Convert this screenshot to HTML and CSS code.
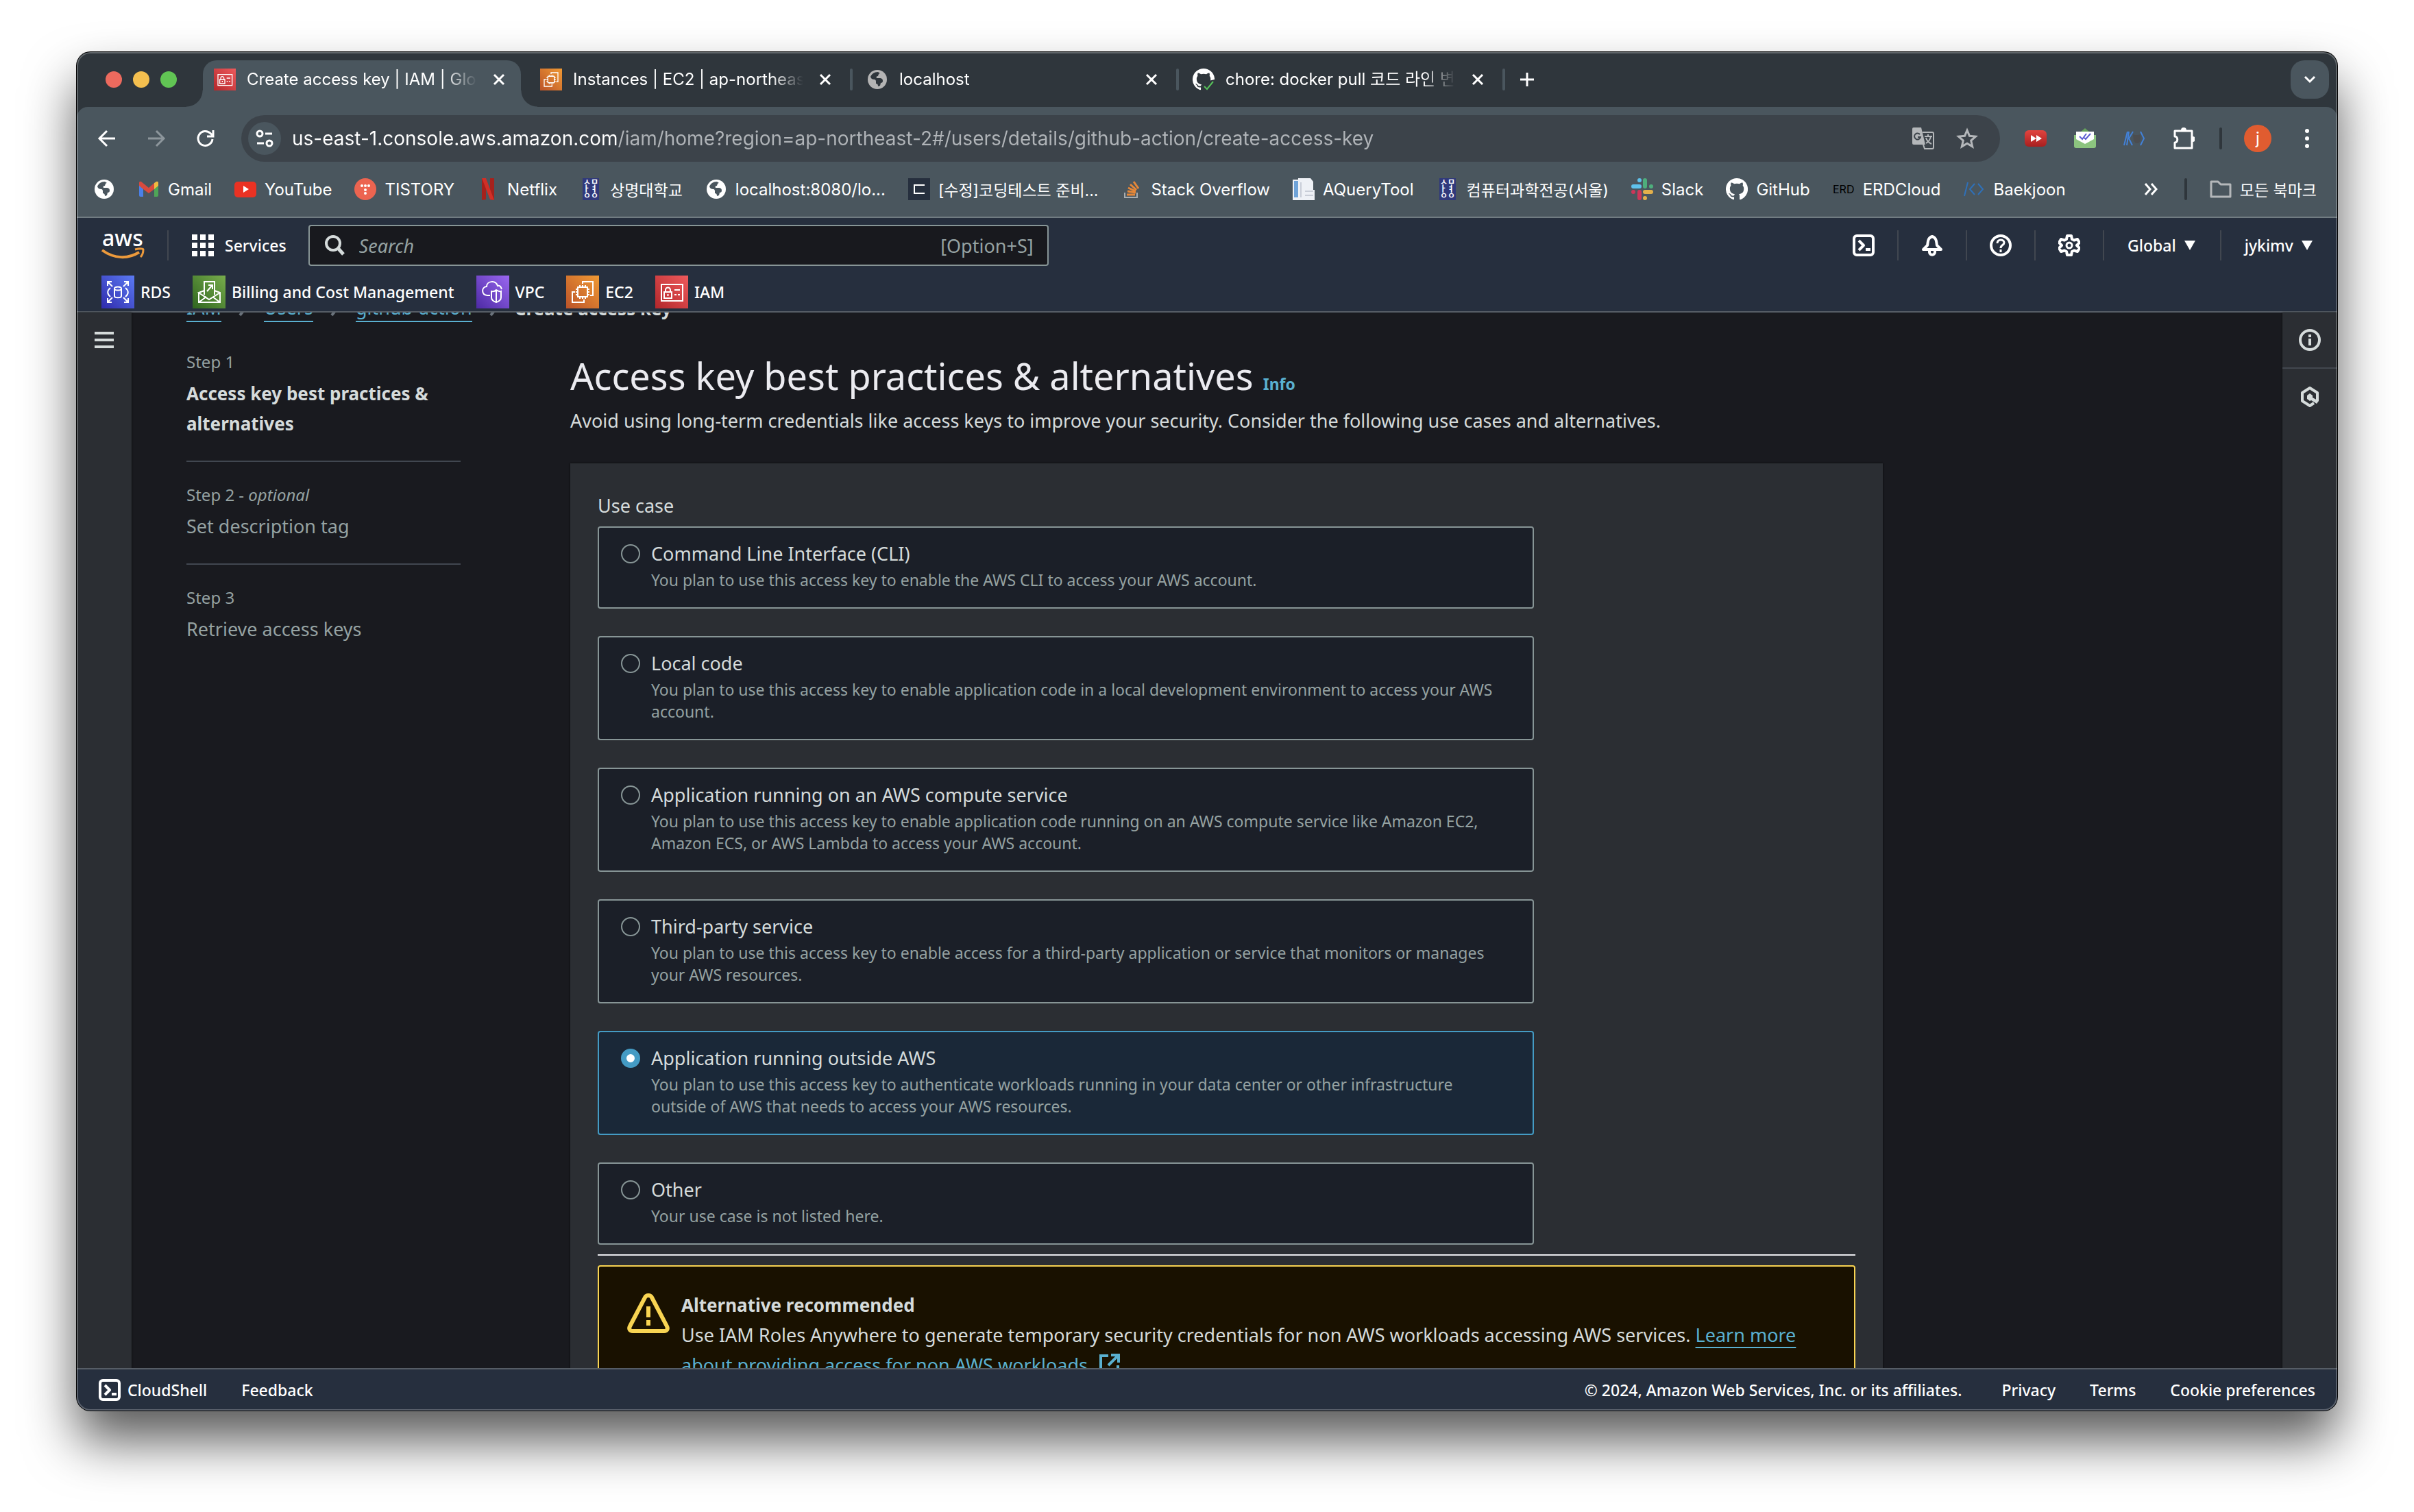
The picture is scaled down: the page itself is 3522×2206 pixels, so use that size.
FILE: index.html
```html
<!DOCTYPE html>
<html lang="en">
<head>
  <meta charset="UTF-8" />
  <meta name="viewport" content="width=device-width, initial-scale=1" />
  <title>Create access key | IAM | Global</title>
  <link rel="stylesheet" href="styles.css">
</head>
<body>
  <!-- shared icons -->
  <svg class="sprite" aria-hidden="true">
    <defs>
      <linearGradient id="g-red" x1="0" y1="1" x2="1" y2="0"><stop offset="0" stop-color="#b3272b" /><stop offset="1" stop-color="#ee5a5c" /></linearGradient>
      <linearGradient id="g-orange" x1="0" y1="1" x2="1" y2="0"><stop offset="0" stop-color="#bb5329" /><stop offset="1" stop-color="#f09a34" /></linearGradient>
      <linearGradient id="g-blue" x1="0" y1="1" x2="1" y2="0"><stop offset="0" stop-color="#2f2bac" /><stop offset="1" stop-color="#5b7af3" /></linearGradient>
      <linearGradient id="g-green" x1="0" y1="1" x2="1" y2="0"><stop offset="0" stop-color="#2f651f" /><stop offset="1" stop-color="#78ad4c" /></linearGradient>
      <linearGradient id="g-purple" x1="0" y1="1" x2="1" y2="0"><stop offset="0" stop-color="#4d2aa4" /><stop offset="1" stop-color="#9a67f0" /></linearGradient>
      <linearGradient id="g-play" x1="0" y1="0" x2="0" y2="1"><stop offset="0" stop-color="#e2443f" /><stop offset="1" stop-color="#a81f1f" /></linearGradient>
    </defs>
    <symbol id="i-iam" viewBox="0 0 48 48">
      <path fill="url(#g-red)" d="M0 0h48v48H0z" />
      <g fill="none" stroke="#fff" stroke-width="2"><path d="M9 13h31v24H9zM13 24h11v9H13zM15 24v-3a3.500 3.500 0 0 1 7 0v3M18.500 27v3M28 21h8M28 28h3M33 28h3" /></g>
    </symbol>
    <symbol id="i-ec2" viewBox="0 0 48 48">
      <path fill="url(#g-orange)" d="M0 0h48v48H0z" />
      <g fill="none" stroke="#fff" stroke-width="2"><path d="M17 17h14v14H17zM20 17v-3M24 17v-3M28 17v-3M20 34v-3M24 34v-3M28 34v-3M17 20h-3M17 24h-3M17 28h-3M34 20h-3M34 24h-3M34 28h-3M24 12V9h15v20h-4M13 24H9v15h17v-4" /></g>
    </symbol>
    <symbol id="i-globe" viewBox="0 0 32 32">
      <circle cx="16" cy="16" r="14" fill="currentColor" />
      <path fill="var(--hole)" d="M17 5c-6 0-9 3-11 7 1 3 3 4 6 4 1 0 2 1 2 3v3c2 0 3 1 3 4l3-1 1-4c2 0 3-1 3-3 0-3-2-4-4-4h-5c-1-2 0-3 2-3 1-3 1-4 3-4z" />
    </symbol>
    <symbol id="i-close" viewBox="0 0 24 24"><path d="M5 5l14 14M19 5L5 19" stroke="currentColor" stroke-width="3" /></symbol>
    <symbol id="i-github" viewBox="0 0 16 16"><path fill="currentColor" d="M8 0a8 8 0 0 0-2.530 15.590c.4.070.55-.17.55-.38v-1.490c-2.010.37-2.530-.49-2.690-.94-.09-.23-.48-.94-.82-1.130-.28-.15-.68-.52-.01-.53.63-.01 1.080.58 1.230.82.72 1.210 1.870.87 2.330.66.07-.52.28-.87.510-1.070-1.780-.2-3.640-.89-3.640-3.950 0-.87.310-1.590.82-2.150-.08-.2-.36-1.020.08-2.120 0 0 .67-.21 2.200.82a7.600 7.600 0 0 1 4 0c1.530-1.040 2.200-.82 2.200-.82.44 1.100.16 1.920.08 2.120.510.56.82 1.270.82 2.150 0 3.070-1.870 3.750-3.650 3.950.29.25.54.73.54 1.480v2.200c0 .21.15.46.55.38A8 8 0 0 0 8 0z" /></symbol>
    <symbol id="i-shell" viewBox="0 0 32 32"><g fill="none" stroke="currentColor" stroke-width="4" stroke-linejoin="round"><rect x="2" y="2" width="28" height="28" rx="4" /><path d="M9 9l7 7-7 7M19 22h7" /></g></symbol>
    <symbol id="i-chevron" viewBox="0 0 24 24"><path d="M8 2l8 10-8 10" fill="none" stroke="currentColor" stroke-width="4" /></symbol>
  </svg>

  <div class="window">
    <div class="tab-strip">
      <div class="lights">
        <span class="light light-red"></span>
        <span class="light light-yellow"></span>
        <span class="light light-green"></span>
      </div>
      <div class="tabs">
        <div class="tab active">
          <svg class="icon"><use href="#i-iam" /></svg>
          <span class="tab-title">Create access key | IAM | Global</span>
          <button class="tab-close" aria-label="Close"><svg><use href="#i-close" /></svg></button>
        </div>
        <div class="tab">
          <svg class="icon"><use href="#i-ec2" /></svg>
          <span class="tab-title">Instances | EC2 | ap-northeast-2</span>
          <button class="tab-close" aria-label="Close"><svg><use href="#i-close" /></svg></button>
        </div>
        <div class="tab">
          <svg class="icon globe-dim"><use href="#i-globe" /></svg>
          <span class="tab-title">localhost</span>
          <button class="tab-close" aria-label="Close"><svg><use href="#i-close" /></svg></button>
        </div>
        <div class="tab">
          <svg class="icon" viewBox="0 0 32 32"><use href="#i-github" width="32" height="32" /><path d="M15 20l17-4v16H15z" fill="#2f363c" /><path d="M17 26l4 4 9-11" fill="none" stroke="#57c25a" stroke-width="2" /></svg>
          <span class="tab-title">chore: docker pull 코드 라인 변경</span>
          <button class="tab-close" aria-label="Close"><svg><use href="#i-close" /></svg></button>
        </div>
      </div>
      <button class="new-tab" aria-label="New tab"><svg viewBox="0 0 24 24"><path d="M12 2v20M2 12h20" stroke="currentColor" stroke-width="3" /></svg></button>
      <button class="tab-search" aria-label="Search tabs"><svg viewBox="0 0 24 24"><path d="M5 8l7 7 7-7" fill="none" stroke="currentColor" stroke-width="3" /></svg></button>
    </div>

    <div class="toolbar">
      <div class="nav-row">
        <button class="tool" aria-label="Back"><svg class="icon" viewBox="0 0 32 32"><path d="M28 16H6M16 5L5 16l11 11" fill="none" stroke="currentColor" stroke-width="3" /></svg></button>
        <button class="tool tool-off" aria-label="Forward"><svg class="icon" viewBox="0 0 32 32"><path d="M4 16h22M16 5l11 11-11 11" fill="none" stroke="currentColor" stroke-width="3" /></svg></button>
        <button class="tool" aria-label="Reload"><svg class="icon" viewBox="0 0 32 32"><path d="M26 17a10.500 10.500 0 1 1-3-8.500l3 3M27 4v9h-9" fill="none" stroke="currentColor" stroke-width="3" /></svg></button>
        <div class="omnibox">
          <button class="site-info" aria-label="Site information"><svg class="icon" viewBox="0 0 32 32"><g fill="none" stroke="currentColor" stroke-width="3"><circle cx="9" cy="9" r="4" /><path d="M17 9h10M5 23h10" /><circle cx="23" cy="23" r="4" /></g></svg></button>
          <input class="url" type="text" aria-label="Address" value="us-east-1.console.aws.amazon.com/iam/home?region=ap-northeast-2#/users/details/github-action/create-access-key">
          <button class="plain dim" aria-label="Translate"><svg class="icon" viewBox="0 0 32 32"><path fill="currentColor" d="M2 0h11l6 25H2a2 2 0 0 1-2-2V2a2 2 0 0 1 2-2z" /><path d="M15 7h14a2 2 0 0 1 2 2v20a2 2 0 0 1-2 2H18l-2-6M18 13h11M23 10v3M27 13c-1 6-4 8-7 10M20 15c1 4 4 7 8 9" fill="none" stroke="currentColor" stroke-width="2" /><path d="M11 10a4.500 4.500 0 1 0 1 4H8" fill="none" stroke="#3c434a" stroke-width="2" /></svg></button>
          <button class="plain dim" aria-label="Bookmark"><svg class="icon" viewBox="0 0 32 32"><path d="M16 4l3.500 8.300 9 .8-6.800 6 2 8.800L16 23.200l-7.700 4.700 2-8.800-6.800-6 9-.8z" fill="none" stroke="currentColor" stroke-width="3" /></svg></button>
        </div>
        <button class="tool" aria-label="Video speed"><svg class="icon" viewBox="0 0 32 32"><rect y="4" width="32" height="24" rx="6" fill="url(#g-play)" /><path fill="#fff" d="M9 11l8 5-8 5zM17 11l8 5-8 5z" /></svg></button>
        <button class="tool" aria-label="Mail tracker"><svg class="icon" viewBox="0 0 32 32"><path fill="#67a35c" d="M16 1L3 12h26z" /><path fill="#8cc47f" d="M0 11h32v16a3 3 0 0 1-3 3H3a3 3 0 0 1-3-3z" /><path fill="#fff" d="M3 6h26v11l-13 7-13-7z" /><path d="M8 13l4 4 6-8M15 15l2 2 7-8" fill="none" stroke="#5a5bd0" stroke-width="2" /></svg></button>
        <button class="tool" aria-label="Code extension"><svg class="icon" viewBox="0 0 32 32"><path d="M14 10l3 1h4l4-1v9l-3 4h-4l-3-4z" fill="#4b4d50" /><path d="M6 6L1 26M8 6L5 26M14 6L8 16l5 10M25 6l5 10-5 10" fill="none" stroke="#4281d8" stroke-width="2" /></svg></button>
        <button class="tool" aria-label="Extensions"><svg class="icon" viewBox="0 0 32 32"><path d="M3 5h25v25H3v-8c5 0 5-9 0-9z" fill="none" stroke="currentColor" stroke-width="3" stroke-linejoin="round" /><path fill="currentColor" d="M12 4a4 4 0 0 1 8 0zM29 13a4 4 0 0 1 0 8z" /></svg></button>
        <span class="tool-sep"></span>
        <button class="tool" aria-label="Profile"><span class="avatar">j</span></button>
        <button class="tool" aria-label="Menu"><svg class="icon" viewBox="0 0 32 32"><g fill="currentColor"><circle cx="16" cy="5" r="3" /><circle cx="16" cy="16" r="3" /><circle cx="16" cy="27" r="3" /></g></svg></button>
      </div>

      <div class="bookmarks">
        <a href="#" aria-label="Bookmark"><svg class="icon globe-light"><use href="#i-globe" /></svg></a>
        <a href="#"><svg class="icon" viewBox="0 0 32 32"><path fill="#4a80e8" d="M2 8l6 5v14H4a2 2 0 0 1-2-2z" /><path fill="#4fa557" d="M30 8l-6 5v14h4a2 2 0 0 0 2-2z" /><path fill="#f0bb40" d="M24 7l3-2a2 2 0 0 1 3 2v4l-6 5z" /><path fill="#d94a3e" d="M2 7a2 2 0 0 1 3-2l11 9 8-7v9l-8 6-8-6-6-5z" /></svg>Gmail</a>
        <a href="#"><svg class="icon" viewBox="0 0 32 32"><rect y="5" width="32" height="23" rx="5" fill="#ea3223" /><path fill="#fff" d="M13 11l8 5-8 5z" /></svg>YouTube</a>
        <a href="#"><svg class="icon" viewBox="0 0 32 32"><circle cx="16" cy="16" r="16" fill="#ec6450" /><g fill="#fff"><circle cx="11" cy="11" r="2" /><circle cx="16" cy="11" r="2" /><circle cx="21" cy="11" r="2" /><circle cx="16" cy="17" r="2" /><circle cx="16" cy="22" r="2" /></g></svg>TISTORY</a>
        <a href="#"><svg class="icon" viewBox="0 0 32 32"><path fill="#a5211c" d="M7 0h6v31l-6 1zM19 0h6v32l-6-1z" /><path fill="#d12f27" d="M7 0h6l12 32-6-1z" /></svg>Netflix</a>
        <a href="#" lang="ko"><svg class="icon smu" viewBox="0 0 32 32"><path fill="#30397c" d="M4 0h24v32H4z" /><text x="5 16" y="10">ㅅㅁ</text><text x="4 15" y="20">ㅏㅕ</text><text x="5 16" y="30">ㅇㅇ</text></svg>상명대학교</a>
        <a href="#"><svg class="icon globe-light"><use href="#i-globe" /></svg>localhost:8080/lo...</a>
        <a href="#" lang="ko"><svg class="icon" viewBox="0 0 32 32"><path fill="#262f3e" d="M0 0h32v32H0z" /><path d="M24 10H9v12h15" fill="none" stroke="#fff" stroke-width="2" /></svg>[수정]코딩테스트 준비...</a>
        <a href="#"><svg class="icon" viewBox="0 0 32 32"><path d="M6 21v7h18v-7" fill="none" stroke="#a9adb0" stroke-width="2" /><path d="M9 24h12M10 19l12 2M11 14l11 5M14 9l9 8M19 5l7 10" stroke="#e58738" stroke-width="3" /></svg>Stack Overflow</a>
        <a href="#"><svg class="icon" viewBox="0 0 32 32"><path fill="#eef1f6" d="M0 2h8V0h18l4 5v12h2v15H0z" /><path fill="#6fa3d8" d="M2 4h6v24H2z" /><path fill="#c9ced8" d="M11 6h2v22h-2zM18 18h12v2H18zM18 24h12v2H18z" /></svg>AQueryTool</a>
        <a href="#" lang="ko"><svg class="icon smu" viewBox="0 0 32 32"><path fill="#30397c" d="M4 0h24v32H4z" /><text x="5 16" y="10">ㅅㅁ</text><text x="4 15" y="20">ㅏㅕ</text><text x="5 16" y="30">ㅇㅇ</text></svg>컴퓨터과학전공(서울)</a>
        <a href="#"><svg class="icon" viewBox="0 0 32 32"><g stroke-width="6" stroke-linecap="round"><path d="M3 12h9M12 3v0" stroke="#5fc2ec" /><path d="M20 3v9M29 12v0" stroke="#4eae7c" /><path d="M20 20h9M20 29v0" stroke="#e3b04b" /><path d="M12 20v9M3 20v0" stroke="#cd3659" /></g></svg>Slack</a>
        <a href="#"><svg class="icon"><use href="#i-github" /></svg>GitHub</a>
        <a href="#"><svg class="icon erd" viewBox="0 0 32 32"><text x="0" y="22">ERD</text></svg>ERDCloud</a>
        <a href="#"><svg class="icon" viewBox="0 0 32 32"><path d="M7 6L2 26M17 8l-7 8 7 8M22 8l7 8-7 8" fill="none" stroke="#2f70b8" stroke-width="2" /></svg>Baekjoon</a>
        <button class="plain more" aria-label="More bookmarks"><svg class="icon" viewBox="0 0 32 32"><path d="M8 8l7 8-7 8M17 8l7 8-7 8" fill="none" stroke="currentColor" stroke-width="3" /></svg></button>
        <span class="tool-sep"></span>
        <a href="#" lang="ko"><svg class="icon dim" viewBox="0 0 32 32"><path d="M2 5h10l4 4h14v18H2z" fill="none" stroke="currentColor" stroke-width="3" stroke-linejoin="round" /></svg>모든 북마크</a>
      </div>
    </div>

    <header class="aws-header">
      <div class="header-row">
        <a href="#" class="logo" aria-label="AWS"><svg viewBox="0 0 62 42"><text x="1" y="22">aws</text><path d="M1 28c18 13 38 13 54 3" fill="none" stroke="#ec9a3c" stroke-width="4" /><path d="M49 27c9-2 12-1 12 0 0 4-1 8-4 11" fill="none" stroke="#ec9a3c" stroke-width="3" /></svg></a>
        <span class="divider"></span>
        <button class="header-btn services"><svg class="icon" viewBox="0 0 32 32"><g fill="currentColor"><path d="M0 0h8v8H0zM12 0h8v8h-8zM24 0h8v8h-8zM0 12h8v8H0zM12 12h8v8h-8zM24 12h8v8h-8zM0 24h8v8H0zM12 24h8v8h-8zM24 24h8v8h-8z" /></g></svg>Services</button>
        <div class="search">
          <svg class="icon" viewBox="0 0 32 32"><circle cx="14" cy="13" r="10" fill="none" stroke="currentColor" stroke-width="4" /><path d="M21 20l8 9" stroke="currentColor" stroke-width="5" /></svg>
          <input type="search" placeholder="Search" aria-label="Search">
          <span class="shortcut">[Option+S]</span>
        </div>
        <div class="header-tools">
          <button class="header-btn icon-btn" aria-label="CloudShell"><svg class="icon"><use href="#i-shell" /></svg></button>
          <button class="header-btn icon-btn" aria-label="Notifications"><svg class="icon" viewBox="0 0 32 32"><path d="M16 3c-7 2-6 9-7 13l-6 6h26l-6-6c-1-4 0-11-7-13zM12 23v3c0 5 8 5 8 0v-3" fill="none" stroke="currentColor" stroke-width="4" stroke-linejoin="round" /></svg></button>
          <button class="header-btn icon-btn" aria-label="Help"><svg class="icon" viewBox="0 0 32 32"><circle cx="16" cy="16" r="14" fill="none" stroke="currentColor" stroke-width="4" /><path d="M11 13c0-7 10-6 10-1 0 4-5 3-5 8M16 22v4" fill="none" stroke="currentColor" stroke-width="3" /></svg></button>
          <button class="header-btn icon-btn" aria-label="Settings"><svg class="icon" viewBox="0 0 32 32"><path d="M13 2h6l1 5 3 1.500 5-1.500 3 5-4 4 4 4-3 5-5-1.500-3 1.500-1 5h-6l-1-5-3-1.500L4 25l-3-5 4-4-4-4 3-5 5 1.500L12 7z" fill="none" stroke="currentColor" stroke-width="4" stroke-linejoin="round" /><circle cx="16" cy="16" r="4" fill="none" stroke="currentColor" stroke-width="3" /></svg></button>
          <button class="header-btn menu-btn">Global<svg class="caret" viewBox="0 0 16 14"><path d="M0 0h16L8 14z" fill="currentColor" /></svg></button>
          <button class="header-btn menu-btn">jykimv<svg class="caret" viewBox="0 0 16 14"><path d="M0 0h16L8 14z" fill="currentColor" /></svg></button>
        </div>
      </div>
      <nav class="favorites">
        <a href="#"><svg viewBox="0 0 48 48"><path fill="url(#g-blue)" d="M0 0h48v48H0z" /><g fill="none" stroke="#fff" stroke-width="2"><path d="M9 15V9h6M9 9l7 7M39 15V9h-6M39 9l-7 7M9 33v6h6M9 39l7-7M39 33v6h-6M39 39l-7-7M13 18c-5 4-5 9 0 13M35 18c5 4 5 9 0 13" /><ellipse cx="24" cy="19" rx="5" ry="2.500" /><path d="M19 19v11c0 3 10 3 10 0V19" /></g></svg>RDS</a>
        <a href="#"><svg viewBox="0 0 48 48"><path fill="url(#g-green)" d="M0 0h48v48H0z" /><g fill="none" stroke="#fff" stroke-width="2"><path d="M17 28V9h15v19M9 25v14h31V25l-8-3M17 22l-8 3 15 10 16-10M9 39l11-8M40 39l-11-8M21 23l7-8M23 14h6v6" /></g></svg>Billing and Cost Management</a>
        <a href="#"><svg viewBox="0 0 48 48"><path fill="url(#g-purple)" d="M0 0h48v48H0z" /><g fill="none" stroke="#fff" stroke-width="2"><path d="M20 29h-4c-9-1-9-12-1-13 0-8 13-10 16-1 4-1 5 2 6 5M29 21c4 3 7 2 7 2v9c0 4-4 6-7 7-3-1-7-3-7-7v-9s4 1 7-2zM29 22v16" /></g></svg>VPC</a>
        <a href="#"><svg><use href="#i-ec2" /></svg>EC2</a>
        <a href="#"><svg><use href="#i-iam" /></svg>IAM</a>
      </nav>
    </header>

    <div class="body">
      <aside class="rail">
        <button class="plain hamburger" aria-label="Open navigation"><svg viewBox="0 0 28 24"><path d="M0 2h28M0 12h28M0 22h28" stroke="currentColor" stroke-width="4" /></svg></button>
      </aside>

      <div class="content">
        <nav class="breadcrumb">
          <a href="#">IAM</a>
          <svg><use href="#i-chevron" /></svg>
          <a href="#">Users</a>
          <svg><use href="#i-chevron" /></svg>
          <a href="#">github-action</a>
          <svg><use href="#i-chevron" /></svg>
          <b>Create access key</b>
        </nav>
        <div class="wizard">
          <ol class="steps">
            <li class="current"><small>Step 1</small><b>Access key best practices &amp; alternatives</b></li>
            <li><small>Step 2 - <i>optional</i></small><span>Set description tag</span></li>
            <li><small>Step 3</small><span>Retrieve access keys</span></li>
          </ol>

          <main>
            <h1>Access key best practices &amp; alternatives <a href="#" class="info">Info</a></h1>
            <p class="lead">Avoid using long-term credentials like access keys to improve your security. Consider the following use cases and alternatives.</p>

            <section class="panel">
              <fieldset class="use-cases">
                <legend>Use case</legend>
                <label class="card">
                  <input type="radio" name="usecase">
                  <span class="card-title">Command Line Interface (CLI)</span>
                  <span class="card-text">You plan to use this access key to enable the AWS CLI to access your AWS account.</span>
                </label>
                <label class="card">
                  <input type="radio" name="usecase">
                  <span class="card-title">Local code</span>
                  <span class="card-text">You plan to use this access key to enable application code in a local development environment to access your AWS account.</span>
                </label>
                <label class="card">
                  <input type="radio" name="usecase">
                  <span class="card-title">Application running on an AWS compute service</span>
                  <span class="card-text">You plan to use this access key to enable application code running on an AWS compute service like Amazon EC2, Amazon ECS, or AWS Lambda to access your AWS account.</span>
                </label>
                <label class="card">
                  <input type="radio" name="usecase">
                  <span class="card-title">Third-party service</span>
                  <span class="card-text">You plan to use this access key to enable access for a third-party application or service that monitors or manages your AWS resources.</span>
                </label>
                <label class="card">
                  <input type="radio" name="usecase" checked>
                  <span class="card-title">Application running outside AWS</span>
                  <span class="card-text">You plan to use this access key to authenticate workloads running in your data center or other infrastructure outside of AWS that needs to access your AWS resources.</span>
                </label>
                <label class="card">
                  <input type="radio" name="usecase">
                  <span class="card-title">Other</span>
                  <span class="card-text">Your use case is not listed here.</span>
                </label>
              </fieldset>
              <hr>
              <div class="alert">
                <svg viewBox="0 0 64 60"><path d="M32 4c-3 0-4 1-5 3L5 49c-2 4 0 7 4 7h46c4 0 6-3 4-7L37 7c-1-2-2-3-5-3z" fill="none" stroke="currentColor" stroke-width="6" stroke-linejoin="round" /><path d="M32 20v16M32 40v8" stroke="currentColor" stroke-width="6" /></svg>
                <div>
                  <b>Alternative recommended</b>
                  <p>Use IAM Roles Anywhere to generate temporary security credentials for non AWS workloads accessing AWS services. <a href="#">Learn more about providing access for non AWS workloads.</a> <svg class="external" viewBox="0 0 32 32"><path d="M14 4H3v25h25V18M18 3h11v11M28 4L14 18" fill="none" stroke="currentColor" stroke-width="4" /></svg></p>
                </div>
              </div>
            </section>
          </main>
        </div>
      </div>

      <aside class="rail rail-right">
        <button class="plain" aria-label="Info"><svg class="icon" viewBox="0 0 32 32"><circle cx="16" cy="16" r="14" fill="none" stroke="currentColor" stroke-width="4" /><path d="M16 14v10M16 8v4" stroke="currentColor" stroke-width="4" /></svg></button>
        <button class="plain" aria-label="Amazon Q"><svg class="icon" viewBox="0 0 32 32"><path d="M27 22V10L16 3 5 10v12l11 7 6-4" fill="none" stroke="currentColor" stroke-width="4" stroke-linejoin="round" /><path d="M16 11l4 3v3l9 5-3 4-8-5-2 1-4-3v-5z" fill="currentColor" /></svg></button>
      </aside>
    </div>

    <footer class="aws-footer">
      <button class="plain"><svg class="icon"><use href="#i-shell" /></svg>CloudShell</button>
      <a href="#">Feedback</a>
      <span class="copyright">© 2024, Amazon Web Services, Inc. or its affiliates.</span>
      <a href="#">Privacy</a>
      <a href="#">Terms</a>
      <a href="#">Cookie preferences</a>
    </footer>
  </div>
</body>
</html>
```

FILE: styles.css
```css
:root {
  --chrome: #4a565e;
  --strip: #2f363c;
  --navy: #262f3e;
  --page: #191a1f;
  --panel: #2b2e33;
  --text: #d5dbdb;
  --muted: #95a2a2;
  --line: #879596;
  --link: #5ab0d0;
  --ui: Inter, "Noto Sans CJK KR", sans-serif;
  --ember: "Noto Sans", "Open Sans", "Noto Sans CJK KR", sans-serif;
}

* {
  box-sizing: border-box;
}

body {
  margin: 0;
  height: 100vh;
  padding: 76px 112px 148px;
  background: #fff;
  font-family: var(--ember);
  display: flex;
}

button {
  font: inherit;
  color: inherit;
  background: none;
  border: none;
  padding: 0;
  cursor: pointer;
}

a {
  color: inherit;
  text-decoration: none;
}

svg {
  display: block;
  flex: none;
}

.sprite {
  position: absolute;
  width: 0;
  height: 0;
}

.icon {
  width: 32px;
  height: 32px;
}

.plain {
  display: flex;
  align-items: center;
}

.dim {
  color: #b4b7ba;
}

.globe-light {
  color: #fff;
  --hole: var(--chrome);
}

.globe-dim {
  color: #b4b4b4;
  --hole: var(--strip);
}

.smu text {
  fill: #fff;
  font-size: 12px;
  font-weight: 700;
}

.erd text {
  font-size: 16px;
}

/* window */
.window {
  position: relative;
  flex: 1;
  min-width: 0;
  display: flex;
  flex-direction: column;
  overflow: hidden;
  background: var(--strip);
  border-radius: 20px;
  box-shadow: 0 0 0 1px #000, 0 44px 76px rgba(0, 0, 0, 0.65);
}

.window::after {
  content: "";
  position: absolute;
  inset: 0;
  border: 2px solid rgba(255, 255, 255, 0.24);
  border-radius: 20px;
  pointer-events: none;
}

/* tabs */
.tab-strip {
  display: flex;
  height: 80px;
  padding: 12px 12px 0 42px;
  font-family: var(--ui);
  font-size: 24px;
  color: #fff;
}

.lights {
  display: flex;
  align-items: center;
  gap: 16px;
  height: 56px;
  margin-right: 38px;
}

.light {
  width: 24px;
  height: 24px;
  border-radius: 50%;
}

.light-red { background: #ec6a5e; }
.light-yellow { background: #f4bf4f; }
.light-green { background: #61c554; }

.tabs {
  display: flex;
  gap: 12px;
}

.tab {
  position: relative;
  display: flex;
  align-items: center;
  gap: 16px;
  width: 464px;
  height: 68px;
  padding: 0 20px 12px 16px;
}

.tab-title {
  flex: 1;
  margin-right: 4px;
  overflow: hidden;
  line-height: 32px;
  white-space: nowrap;
  mask-image: linear-gradient(to left, transparent, #000 48px);
}

.tab-close svg,
.new-tab svg,
.tab-search svg {
  width: 24px;
  height: 24px;
}

.tab:not(.active)::after {
  content: "";
  position: absolute;
  right: -8px;
  top: 12px;
  width: 4px;
  height: 32px;
  border-radius: 2px;
  background: var(--chrome);
}

.tab.active {
  background: var(--chrome);
  border-radius: 20px 20px 0 0;
}

/* flared feet of the active tab */
.tab.active::before,
.tab.active::after {
  content: "";
  position: absolute;
  bottom: 0;
  width: 24px;
  height: 24px;
}

.tab.active::before {
  right: 100%;
  background: radial-gradient(circle at 0 0, transparent 23px, var(--chrome) 24px);
}

.tab.active::after {
  left: 100%;
  background: radial-gradient(circle at 100% 0, transparent 23px, var(--chrome) 24px);
}

.new-tab {
  height: 56px;
  margin-left: 28px;
}

.tab-search {
  display: flex;
  align-items: center;
  justify-content: center;
  width: 56px;
  height: 56px;
  margin-left: auto;
  border-radius: 20px;
  background: var(--chrome);
}

/* toolbar */
.toolbar {
  background: var(--chrome);
  border-bottom: 2px solid #717c82;
  border-radius: 16px 16px 0 0;
  font-family: var(--ui);
  color: #fff;
}

.nav-row {
  display: flex;
  align-items: center;
  padding: 12px 8px 0;
}

.tool {
  display: flex;
  align-items: center;
  justify-content: center;
  width: 72px;
  height: 68px;
}

.tool-off {
  color: #8d969c;
}

.omnibox {
  flex: 1;
  display: flex;
  align-items: center;
  gap: 32px;
  height: 68px;
  margin: 0 16px;
  padding: 0 32px 0 10px;
  border-radius: 34px;
  background: #3c434a;
}

.site-info {
  display: flex;
  align-items: center;
  justify-content: center;
  width: 48px;
  height: 48px;
  margin-right: -16px;
  border-radius: 50%;
  background: var(--chrome);
}

.url {
  flex: 1;
  min-width: 0;
  padding: 0;
  border: none;
  outline: none;
  font-family: var(--ui);
  font-size: 28px;
  color: transparent;
  background: linear-gradient(to right, #fff 474px, #b0b4b8 474px);
  -webkit-background-clip: text;
  background-clip: text;
}

.tool-sep {
  width: 4px;
  height: 32px;
  margin: 0 16px;
  border-radius: 2px;
  background: var(--strip);
}

.avatar {
  width: 40px;
  height: 40px;
  border-radius: 50%;
  background: #e05c30;
  font-size: 24px;
  line-height: 40px;
}

.bookmarks {
  display: flex;
  align-items: center;
  gap: 33px;
  height: 80px;
  padding: 0 30px 0 24px;
  font-size: 24px;
  white-space: nowrap;
}

.bookmarks a {
  display: flex;
  align-items: center;
  gap: 12px;
}

.bookmarks a:lang(ko) {
  font-size: 23px;
}

.bookmarks .more {
  margin-left: auto;
}

.bookmarks .tool-sep {
  margin: 0;
}

/* console header */
.aws-header {
  background: var(--navy);
  border-bottom: 2px solid #565d66;
  color: #fff;
  font-size: 23px;
}

.header-row {
  display: flex;
  align-items: center;
  height: 80px;
  padding-left: 36px;
}

.logo svg {
  width: 62px;
  height: 42px;
  overflow: visible;
}

.logo text {
  fill: #fff;
  font-size: 32px;
  font-weight: 500;
}

.divider {
  width: 2px;
  height: 44px;
  margin: 0 34px;
  background: #414750;
}

.header-btn {
  display: flex;
  align-items: center;
  font-weight: 500;
}

.services {
  gap: 16px;
  margin-right: 32px;
}

.search {
  display: flex;
  align-items: center;
  gap: 20px;
  width: 1080px;
  height: 60px;
  padding: 0 20px;
  border: 2px solid var(--line);
  border-radius: 4px;
  background: #18191e;
  color: var(--text);
  font-size: 27px;
}

.search input {
  flex: 1;
  min-width: 0;
  border: none;
  outline: none;
  padding: 0;
  background: none;
  color: inherit;
  font: inherit;
}

.search input::placeholder {
  color: var(--muted);
  font-style: italic;
}

.shortcut {
  color: var(--muted);
}

.header-tools {
  display: flex;
  margin-left: auto;
}

.header-tools .header-btn {
  height: 44px;
  border-right: 2px solid #414750;
}

.header-tools .header-btn:last-child {
  border-right: none;
}

.icon-btn {
  justify-content: center;
  width: 100px;
}

.menu-btn {
  gap: 12px;
  padding: 0 36px 0 34px;
}

.caret {
  width: 16px;
  height: 14px;
}

.favorites {
  display: flex;
  gap: 32px;
  padding: 4px 36px;
  font-weight: 500;
}

.favorites a {
  display: flex;
  align-items: center;
  gap: 9px;
}

.favorites svg {
  width: 48px;
  height: 48px;
}

/* body */
.body {
  flex: 1;
  min-height: 0;
  display: flex;
  background: var(--page);
  color: var(--text);
  font-size: 27px;
  line-height: 44px;
}

.body b {
  font-size: 26px;
}

.rail {
  width: 80px;
  background: var(--panel);
  box-shadow: 0 0 2px #000;
}

.rail .plain {
  justify-content: center;
  width: 100%;
  height: 80px;
}

.hamburger svg {
  width: 28px;
  height: 24px;
}

.rail-right .plain + .plain {
  height: 84px;
  border-top: 2px solid #42474f;
}

.content {
  flex: 1;
  min-width: 0;
  overflow: hidden;
  padding: 0 80px;
}

/* the page is scrolled a little, so the breadcrumb slides under the header */
.breadcrumb {
  display: flex;
  align-items: center;
  gap: 19px;
  margin-top: -28px;
}

.breadcrumb a {
  border-bottom: 2px solid var(--link);
  color: var(--link);
  line-height: 38px;
}

.breadcrumb svg {
  width: 24px;
  height: 24px;
  color: #6b737c;
}

.wizard {
  display: flex;
  gap: 160px;
  padding-top: 34px;
}

.steps {
  flex: none;
  width: 400px;
  margin: 0;
  padding: 0;
  list-style: none;
  color: var(--muted);
}

.steps li {
  display: flex;
  flex-direction: column;
  gap: 2px;
  padding-bottom: 32px;
}

.steps li + li {
  padding-top: 26px;
  border-top: 2px solid #414750;
}

.steps small {
  font-size: 24px;
}

.steps b {
  color: var(--text);
}

main {
  flex: 1;
  min-width: 0;
  max-width: 1915px;
}

h1 {
  margin: 6px 0 8px;
  font-size: 54px;
  font-weight: 400;
  line-height: 72px;
  color: #ebebf0;
}

.info {
  font-size: 23px;
  font-weight: 700;
  line-height: 32px;
  color: var(--link);
}

.lead {
  margin: 0;
}

.panel {
  margin-top: 40px;
  padding: 40px;
  background: var(--panel);
  box-shadow: 0 0 2px #000;
}

.use-cases {
  display: flex;
  flex-direction: column;
  gap: 40px;
  max-width: 1366px;
  margin: 0;
  padding: 0;
  border: none;
}

.use-cases legend {
  padding: 0;
  margin-bottom: 8px;
}

.card {
  display: grid;
  grid-template-columns: 28px 1fr;
  column-gap: 16px;
  row-gap: 2px;
  align-items: center;
  padding: 18px 40px 24px 32px;
  border: 2px solid var(--line);
  border-radius: 4px;
  background: #1b1f28;
}

.card:has(input:checked) {
  border-color: #449bc4;
  background: #1a2838;
}

.card input {
  appearance: none;
  width: 28px;
  height: 28px;
  margin: 0;
  border: 2px solid var(--line);
  border-radius: 50%;
}

.card input:checked {
  border: 8px solid #449bc4;
  background: #fff;
}

.card-title {
  line-height: 40px;
}

.card-text {
  grid-column: 2;
  font-size: 23px;
  line-height: 32px;
  color: var(--muted);
}

hr {
  height: 2px;
  margin: 14px 0;
  border: none;
  background: #eaeaee;
}

.alert {
  display: flex;
  gap: 16px;
  padding: 34px 40px;
  border: 2px solid #f8d452;
  border-radius: 4px;
  background: #191100;
}

.alert > svg {
  width: 64px;
  height: 60px;
  margin-top: 4px;
  color: #f8d452;
}

.alert p {
  margin: 0;
}

.alert a {
  color: var(--link);
  text-decoration: underline;
  text-decoration-thickness: 2px;
  text-underline-offset: 7px;
}

.external {
  display: inline-block;
  width: 32px;
  height: 32px;
  margin-left: 2px;
  vertical-align: -4px;
  color: var(--link);
}

/* footer */
.aws-footer {
  display: flex;
  align-items: center;
  gap: 50px;
  height: 62px;
  padding: 0 32px;
  border-top: 2px solid #565d66;
  background: var(--navy);
  color: #fff;
  font-size: 23px;
  font-weight: 500;
  white-space: nowrap;
}

.aws-footer .plain {
  gap: 10px;
}

.copyright {
  margin-left: auto;
  margin-right: 8px;
}
```
